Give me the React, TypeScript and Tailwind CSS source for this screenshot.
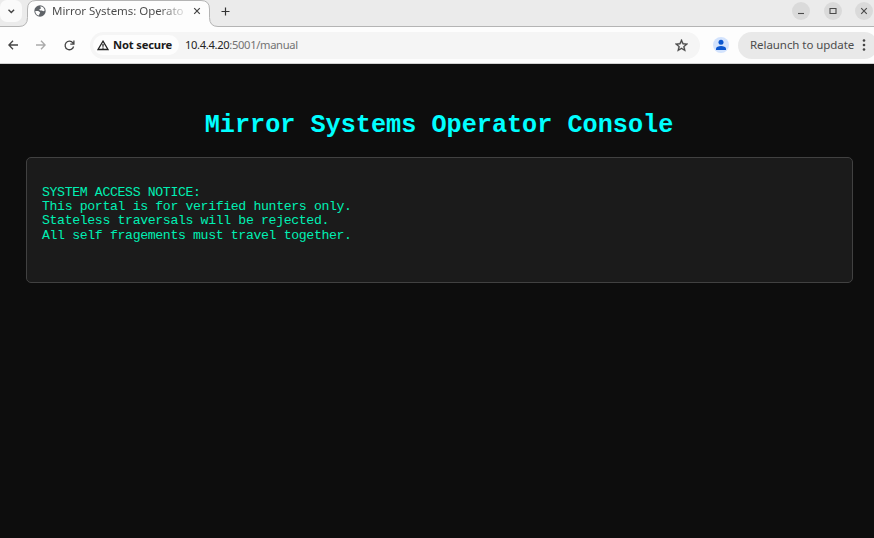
import React from "react";

function WindowButton({ children }: { children: React.ReactNode }) {
  return (
    <div className="flex h-[18px] w-[18px] shrink-0 items-center justify-center rounded-full bg-[#dadada]">
      <svg width="18" height="18" viewBox="0 0 18 18" fill="none" stroke="#4a4a4a" strokeWidth="1.100">
        {children}
      </svg>
    </div>
  );
}

function TabStrip() {
  return (
    <div className="relative flex h-[27px] bg-[#ebebeb]">
      <svg className="absolute inset-0" width="874" height="27" viewBox="0 0 874 27" fill="none">
        <path
          d="M0 26.5H19Q27.5 26.5 27.5 17.5V9Q27.5 .5 36 .5H201Q209.5 .5 209.5 9V17.5Q209.5 26.5 218 26.5H874V27H0Z"
          fill="#fdfdfd"
        />
        <path
          d="M0 26.5H19Q27.5 26.5 27.5 17.5V9Q27.5 .5 36 .5H201Q209.5 .5 209.5 9V17.5Q209.5 26.5 218 26.5H874"
          stroke="#b4b4b4"
        />
      </svg>
      <div className="relative flex h-[22px] w-full items-center">
        <div className="flex h-[22px] w-[22px] shrink-0 items-center justify-center rounded-[7px] bg-[#fafafa]">
          <svg width="22" height="22" viewBox="0 0 22 22" fill="none" stroke="#444" strokeWidth="1.4">
            <path d="M8.500 9.800L11.300 12.600L14.100 9.800" />
          </svg>
        </div>
        <svg className="ml-[12px] shrink-0" width="12" height="12" viewBox="0 0 12 12">
          <circle cx="6" cy="6" r="5.700" fill="#5f6368" />
          <path d="M6.300 1.300C8.800 1.500 10.500 3.300 10.700 5.600L9.500 6.300L7.600 5.500L6 5.600L5.200 4.600L6.900 3.500Z" fill="#fdfdfd" />
          <path d="M1.300 6H4.300L6.200 7.400L5.600 8.800L4.700 10.500C2.700 10 1.300 8.300 1.300 6Z" fill="#fdfdfd" />
        </svg>
        <div className="ml-[6px] w-[132px] shrink-0 overflow-hidden bg-gradient-to-r from-[#484848] from-80% to-[#dddddd] bg-clip-text text-[11.5px] leading-[16px] tracking-[-0.05px] whitespace-nowrap text-transparent">
          Mirror Systems: Operato
        </div>
        <svg className="ml-[9px] shrink-0" width="8" height="8" viewBox="0 0 8 8" stroke="#444" strokeWidth="1.200">
          <path d="M1.200 1.200L6.800 6.800M6.800 1.200L1.200 6.800" />
        </svg>
        <svg className="ml-[20px] shrink-0" width="9" height="9" viewBox="0 0 9 9" stroke="#333" strokeWidth="1.200">
          <path d="M4.500 .5V8.500M.5 4.500H8.500" />
        </svg>
        <div className="ml-auto flex gap-[13.500px] pr-[1px]">
          <WindowButton>
            <path d="M6 11.500H12" />
          </WindowButton>
          <WindowButton>
            <path d="M6 6.500H12V11.500H6Z" />
          </WindowButton>
          <WindowButton>
            <path d="M6.200 6.200L11.800 11.800M11.800 6.200L6.200 11.800" />
          </WindowButton>
        </div>
      </div>
    </div>
  );
}

function Toolbar() {
  return (
    <div className="flex h-[37px] items-center overflow-hidden border-b border-[#d2d2d2] bg-[#fdfdfd]">
      <svg className="ml-[8px] shrink-0" width="10" height="10" viewBox="0 0 10 10" fill="none" stroke="#444" strokeWidth="1.300">
        <path d="M10 5H1M5 .8L.9 5L5 9.200" />
      </svg>
      <svg className="ml-[18px] shrink-0" width="10" height="10" viewBox="0 0 10 10" fill="none" stroke="#aaa" strokeWidth="1.300">
        <path d="M0 5H9M5 .8L9.100 5L5 9.200" />
      </svg>
      <svg className="ml-[18px] shrink-0" width="11" height="11" viewBox="0 0 11 11" fill="none" stroke="#444" strokeWidth="1.300">
        <path d="M9.600 6.500A4.300 4.300 0 1 1 8.900 2.900L9.700 3.800M9.900 .5V4.200H6.300" />
      </svg>
      <div className="ml-[15px] flex h-[27px] w-[610px] shrink-0 items-center rounded-full bg-[#f5f5f5] pr-[12px] pl-[3px]">
        <div className="flex h-[20px] w-[86px] shrink-0 items-center rounded-full bg-[#fdfdfd] pl-[4px]">
          <svg className="shrink-0" width="12" height="11" viewBox="0 0 12 11" fill="none" stroke="#222" strokeWidth="1.300">
            <path d="M6 1.200L11 9.500H1Z" />
            <path d="M6 4V6.700M6 7.500V8.700" />
          </svg>
          <span className="ml-[4px] text-[11.200px] font-bold tracking-[-0.15px] whitespace-nowrap text-[#1b1b1b]">Not secure</span>
        </div>
        <span className="ml-[6px] text-[11.200px] tracking-[-0.34px] whitespace-nowrap text-[#242424]">
          10.4.4.20<span className="text-[#737373]">:5001/manual</span>
        </span>
        <svg className="ml-auto shrink-0" width="13" height="13" viewBox="2 2 20 20" fill="#454545" stroke="#454545" strokeWidth=".5">
          <path d="M22 9.240l-7.190-.62L12 2 9.190 8.630 2 9.240l5.460 4.730L5.820 21 12 17.270 18.180 21l-1.630-7.030L22 9.240zM12 15.400l-3.760 2.270 1-4.280-3.320-2.880 4.380-.38L12 6.100l1.710 4.040 4.380.38-3.320 2.880 1 4.280L12 15.400z" />
        </svg>
      </div>
      <div className="ml-[13px] flex h-[16px] w-[16px] shrink-0 items-center justify-center rounded-full bg-[#d3e3fd]">
        <svg width="16" height="16" viewBox="0 0 16 16" fill="#0b57d0">
          <circle cx="8" cy="5.300" r="2.500" />
          <path d="M3 13V11.500C3 9.900 5.500 9 8 9S13 9.900 13 11.500V13Z" />
        </svg>
      </div>
      <div className="ml-[9px] flex h-[27px] w-[140px] shrink-0 items-center rounded-full bg-[#e9e9e9] pl-[12px]">
        <span className="w-[105px] shrink-0 text-[11.500px] tracking-[-0.06px] whitespace-nowrap text-[#4d4d4d]">Relaunch to update</span>
        <svg className="ml-[7px]" width="4" height="12" viewBox="0 0 4 12" fill="#444">
          <circle cx="2" cy="1.500" r="1.300" />
          <circle cx="2" cy="6" r="1.300" />
          <circle cx="2" cy="10.500" r="1.300" />
        </svg>
      </div>
    </div>
  );
}

export default function App() {
  return (
    <div className="flex h-[538px] w-[874px] flex-col overflow-hidden bg-[#0d0d0d] font-['Noto_Sans',sans-serif]">
      <TabStrip />
      <Toolbar />
      <main className="flex-1 pt-[47px] pr-[21.500px] pl-[25.500px] font-['Liberation_Mono',monospace]">
        <h1 className="text-center text-[25.200px] leading-[29px] font-bold text-[#00ffff]">
          Mirror Systems Operator Console
        </h1>
        <section className="mt-[17px] h-[126px] rounded-[5px] border border-[#414141] bg-[#1b1b1b] px-[15.500px] pt-[28px]">
          <pre className="font-['Liberation_Mono',monospace] text-[13.200px] leading-[14.200px] tracking-[-0.361px] text-[#00f0b4]">
            {"SYSTEM ACCESS NOTICE:\nThis portal is for verified hunters only.\nStateless traversals will be rejected.\nAll self fragements must travel together."}
          </pre>
        </section>
      </main>
    </div>
  );
}
